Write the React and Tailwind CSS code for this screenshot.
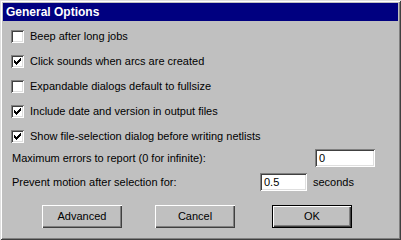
import React from "react";

const sunken =
  "bg-white shadow-[inset_1px_1px_0_#808080,inset_-1px_-1px_0_#ffffff,inset_2px_2px_0_#404040,inset_-2px_-2px_0_#dfdfdf]";

function Check({ checked }) {
  return (
    <span className={"relative block w-[13px] h-[13px] shrink-0 " + sunken}>
      {checked && (
        <svg
          className="absolute left-[3px] top-[3px]"
          width="7"
          height="7"
          viewBox="0 0 7 7"
          shapeRendering="crispEdges"
        >
          <rect x="0" y="2" width="1" height="3" fill="#000" />
          <rect x="1" y="3" width="1" height="3" fill="#000" />
          <rect x="2" y="4" width="1" height="3" fill="#000" />
          <rect x="3" y="3" width="1" height="3" fill="#000" />
          <rect x="4" y="2" width="1" height="3" fill="#000" />
          <rect x="5" y="1" width="1" height="3" fill="#000" />
          <rect x="6" y="0" width="1" height="3" fill="#000" />
        </svg>
      )}
    </span>
  );
}

function Row({ checked, label }) {
  return (
    <div className="flex items-center h-[25px] pl-[8px] gap-[6px]">
      <Check checked={checked} />
      <span className="leading-none">{label}</span>
    </div>
  );
}

function Button({ children, def, className }) {
  return (
    <div
      className={
        "w-[80px] h-[23px] flex items-center justify-center " +
        (def
          ? "border border-black shadow-[inset_1px_1px_0_#ffffff,inset_-1px_-1px_0_#404040,inset_-2px_-2px_0_#808080] "
          : "shadow-[inset_1px_1px_0_#ffffff,inset_-1px_-1px_0_#404040,inset_-2px_-2px_0_#808080] ") +
        (className || "")
      }
    >
      {children}
    </div>
  );
}

export default function App() {
  return (
    <div
      className="w-[401px] h-[240px] bg-[#c0c0c0] p-[3px] flex flex-col text-[11px] text-black shadow-[inset_1px_1px_0_#dfdfdf,inset_-1px_-1px_0_#404040,inset_2px_2px_0_#ffffff,inset_-2px_-2px_0_#808080]"
      style={{ fontFamily: '"Liberation Sans", Arial, sans-serif' }}
    >
      <div className="h-[18px] bg-[#000080] text-white font-bold text-[12px] flex items-center pl-[3px]">
        General Options
      </div>
      <div className="mt-[3px] flex flex-col">
        <Row checked={false} label="Beep after long jobs" />
        <Row checked={true} label="Click sounds when arcs are created" />
        <Row checked={false} label="Expandable dialogs default to fullsize" />
        <Row checked={true} label="Include date and version in output files" />
        <Row checked={true} label="Show file-selection dialog before writing netlists" />
      </div>
      <div className="flex items-center h-[18px] pl-[9px]">
        <span className="w-[303px]">Maximum errors to report (0 for infinite):</span>
        <div className={"w-[60px] h-[18px] flex items-center pl-[4px] " + sunken}>0</div>
      </div>
      <div className="flex items-center h-[18px] mt-[6px] pl-[9px]">
        <span className="w-[248px]">Prevent motion after selection for:</span>
        <div className={"w-[47px] h-[18px] flex items-center pl-[4px] " + sunken}>0.5</div>
        <span className="ml-[6px]">seconds</span>
      </div>
      <div className="flex mt-[14px] pl-[39px]">
        <Button>Advanced</Button>
        <Button className="ml-[33px]">Cancel</Button>
        <Button def className="ml-[37px]">OK</Button>
      </div>
    </div>
  );
}
